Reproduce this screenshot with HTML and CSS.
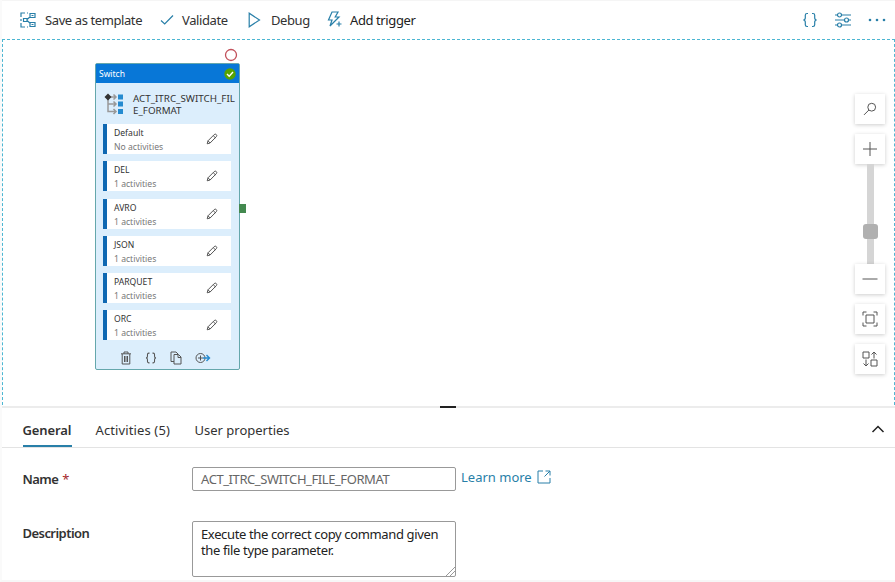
FILE: index.html
```html
<!DOCTYPE html>
<html lang="en">
<head>
<meta charset="utf-8">
<title>Pipeline</title>
<link rel="stylesheet" href="styles.css">
</head>
<body>
<svg class="defs" width="0" height="0">
  <symbol id="pencil" viewBox="0 0 12 12"><path d="M1.2 10.8 2 7.8 8.2 1.6a1.4 1.4 0 0 1 2.1 2.1L4.1 10zM2 7.8 4.1 10M7.2 2.6l2.1 2.1"/></symbol>
  <symbol id="braces" viewBox="0 0 16 16"><path d="M6 1.5H5Q3.3 1.5 3.3 3.2v2.6Q3.3 8 1.3 8q2 0 2 2.2v2.6q0 1.7 1.7 1.7h1M10 1.5h1q1.7 0 1.7 1.7v2.6q0 2.2 2 2.2-2 0-2 2.2v2.6q0 1.7-1.7 1.7h-1"/></symbol>
</svg>
<div class="app">
  <header class="toolbar">
    <div class="tool save">
      <svg width="16" height="16" viewBox="0 0 16 16"><path d="M5 1H1v4M1 11v4h4M1 7v2M7 1h1M7 15h1M7 7.500l3.500-3M7 8.500l3.500 3M10 1.500h5v4h-5zM10 10.500h5v4h-5zM3.500 6.500H7v3H3.500zM11.500 3.500h2M11.500 12.500h2"/></svg>
      <span>Save as template</span>
    </div>
    <div class="tool validate">
      <svg width="14" height="12" viewBox="0 0 14 12"><path d="M1 6.500 4.700 10 13 1.500"/></svg>
      <span>Validate</span>
    </div>
    <div class="tool debug">
      <svg width="13" height="16" viewBox="0 0 13 16"><path d="M1.200 1.200v13.600L11.500 8z"/></svg>
      <span>Debug</span>
    </div>
    <div class="tool trigger">
      <svg width="15" height="17" viewBox="0 0 15 17"><path d="M5 1h6L8.200 6H12L3 15l2-6H1.500zM12 10.500v5M9.500 13h5"/></svg>
      <span>Add trigger</span>
    </div>
    <div class="right-tools">
      <svg width="16" height="16"><use href="#braces"/></svg>
      <svg width="18" height="16" viewBox="0 0 18 16"><path d="M1 3h2.500M7.500 3H17M1 8h9.500M14.500 8H17M1 13h2.500M7.500 13H17"/><circle cx="5.500" cy="3" r="2"/><circle cx="12.500" cy="8" r="2"/><circle cx="5.500" cy="13" r="2"/></svg>
      <svg class="dots" width="18" height="4" viewBox="0 0 18 4"><circle cx="2" cy="2" r="1.300"/><circle cx="9" cy="2" r="1.300"/><circle cx="16" cy="2" r="1.300"/></svg>
    </div>
  </header>

  <main class="canvas">
    <svg class="fail-port" width="14" height="14" viewBox="0 0 14 14"><circle cx="7" cy="7" r="5.500"/></svg>
    <section class="node">
      <div class="node-head"><span>Switch</span>
        <svg width="12" height="12" viewBox="0 0 12 12"><circle cx="6" cy="6" r="5.700"/><path d="m3 6 2.200 2.200L9 4"/></svg>
      </div>
      <div class="node-title">
        <svg width="20" height="22" viewBox="0 0 20 22"><path class="wire" d="M4 4v14.500h8M4 11h8M4 4h8M9.500 1.500 12 4 9.500 6.500M9.500 8.500 12 11l-2.500 2.500M9.500 16l2.500 2.500L9.500 21"/><path class="diamond" d="M4 .5 7.500 4 4 7.500.5 4z"/><path class="blocks" d="M14 1.500h5v5h-5zM14 8.500h5v5h-5zM14 16h5v5h-5z"/></svg>
        <h2><span>ACT_ITRC_SWITCH_FIL</span><br><span class="second">E_FORMAT</span></h2>
      </div>
      <div class="cases">
        <div class="case"><div><b>Default</b><small>No activities</small></div><svg width="12" height="12"><use href="#pencil"/></svg></div>
        <div class="case"><div><b>DEL</b><small>1 activities</small></div><svg width="12" height="12"><use href="#pencil"/></svg></div>
        <div class="case"><div><b>AVRO</b><small>1 activities</small></div><svg width="12" height="12"><use href="#pencil"/></svg></div>
        <div class="case"><div><b>JSON</b><small>1 activities</small></div><svg width="12" height="12"><use href="#pencil"/></svg></div>
        <div class="case"><div><b>PARQUET</b><small>1 activities</small></div><svg width="12" height="12"><use href="#pencil"/></svg></div>
        <div class="case"><div><b>ORC</b><small>1 activities</small></div><svg width="12" height="12"><use href="#pencil"/></svg></div>
      </div>
      <div class="node-actions">
        <svg width="12" height="14" viewBox="0 0 12 14"><path d="M1 2.800h10M4 2.800V1h4v1.800M2.200 3v10h7.600V3M4.500 5v6M6 5v6M7.500 5v6"/></svg>
        <svg class="json" width="12" height="12"><use href="#braces"/></svg>
        <svg width="12" height="14" viewBox="0 0 12 14"><path d="M4 10.500H1V1h5l2 2M4 3.500h4.500L11 6v7H4zM8 3.500V6.500h3"/></svg>
        <svg width="16" height="12" viewBox="0 0 16 12"><circle cx="5.500" cy="6" r="4.500"/><path d="M5.500 3.500v5M3 6h5"/><path class="arrow" d="M8 6h6M11.500 3 14.500 6l-3 3"/></svg>
      </div>
    </section>
    <i class="success-port"></i>

    <aside class="zoom">
      <div class="zbtn find"><svg width="14" height="14" viewBox="0 0 14 14"><circle cx="8.700" cy="5.200" r="3.900"/><path d="M5.900 8 1 12.900"/></svg></div>
      <div class="zbtn"><svg width="16" height="16" viewBox="0 0 16 16"><path d="M8 1v14M1 8h14"/></svg></div>
      <div class="track"><i></i></div>
      <div class="zbtn minus"><svg width="16" height="16" viewBox="0 0 16 16"><path d="M.5 8h15"/></svg></div>
      <div class="zbtn fit"><svg width="16" height="16" viewBox="0 0 16 16"><path d="M1 4.500V1h3.500M11.500 1H15v3.500M15 11.500V15h-3.500M4.500 15H1v-3.500M4 4h8v8H4z"/></svg></div>
      <div class="zbtn"><svg width="16" height="16" viewBox="0 0 16 16"><path d="M1 1h6v6H1zM9 9h6v6H9zM12 7.500V1M9.500 3.500 12 1l2.500 2.500M4 8.500V15M1.500 12.500 4 15l2.500-2.500"/></svg></div>
    </aside>
  </main>

  <section class="panel">
    <i class="grip"></i>
    <nav class="tabs">
      <span class="tab active"><span>General</span></span>
      <span class="tab acts"><span>Activities (5)</span></span>
      <span class="tab props"><span>User properties</span></span>
      <svg width="14" height="8" viewBox="0 0 14 8"><path d="M1.500 7 7 1.500 12.500 7"/></svg>
    </nav>
    <div class="row name-row">
      <label><span>Name</span> <em>*</em></label>
      <div class="field name"><span>ACT_ITRC_SWITCH_FILE_FORMAT</span></div>
      <a><span>Learn more</span><svg width="14" height="14" viewBox="0 0 14 14"><path d="M6 1H1v12h12V8M8.500 1H13v4.500M13 1 7.500 6.500"/></svg></a>
    </div>
    <div class="row desc-row">
      <label><span>Description</span></label>
      <div class="field desc">Execute the correct copy command given the file type parameter.
        <svg width="10" height="10" viewBox="0 0 10 10"><path d="M1 10 10 1M5 10l5-5"/></svg>
      </div>
    </div>
  </section>
</div>
</body>
</html>
```
FILE: styles.css
```css
* { box-sizing: border-box; }
body { margin: 0; background: #fff; color: #323232; font: 13px/18px "Noto Sans", "Open Sans", sans-serif; overflow: hidden; }
svg { display: block; flex: none; fill: none; stroke: #555; stroke-width: 1; }
.defs { position: absolute; }
.app { width: 895px; height: 582px; display: flex; flex-direction: column; border-left: 2px solid #fafafa; border-bottom: 2px solid #f7f7f7; }
.app span { white-space: nowrap; }
.toolbar { height: 39px; flex: none; display: flex; align-items: center; padding: 0 9px 1px 18px; border-top: 1px solid #f5f5f5; letter-spacing: -.4px; }
.toolbar svg { stroke: #287fa8; stroke-width: 1.2; }
.tool { display: flex; align-items: center; flex: none; }
.save { width: 140px; gap: 9px; }
.validate { width: 88px; gap: 8px; }
.debug { width: 79px; gap: 10px; }
.trigger { gap: 8px; color: #222; }
.right-tools { margin-left: auto; display: flex; align-items: center; gap: 16px; }
.toolbar .dots { fill: #287fa8; stroke: none; }

.canvas { position: relative; height: 366px; flex: none; border: 1px dashed #4cb6d2; border-bottom: 0; }
.fail-port { position: absolute; left: 221px; top: 8px; stroke: #c2505a; stroke-width: 1.3; }
.success-port { position: absolute; left: 236px; top: 164px; width: 7px; height: 9px; background: #43894f; }
.node { position: absolute; left: 92px; top: 23px; width: 145px; height: 307px; border: 1px solid #65a7ac; border-radius: 2px; background: #dceefc; }
.node-head { height: 19px; display: flex; align-items: center; justify-content: space-between; background: #0877d7; color: #fff; font-size: 8.5px; padding: 1px 3px 0 3px; }
.node-head svg { fill: #57a300; stroke: none; }
.node-head path { fill: none; stroke: #fff; stroke-width: 1.4; }
.node-title { height: 41px; display: flex; padding: 10px 0 0 8px; gap: 9px; }
.node-title h2 { margin: 0; font-size: 9.8px; line-height: 12px; font-weight: 400; color: #333; }
.wire { stroke: #999; stroke-width: 1.5; }
.diamond { fill: #333; stroke: none; }
.blocks { fill: #258bd0; stroke: none; }
.cases { display: flex; flex-direction: column; gap: 7.3px; padding: 0 8px 0 7px; }
.case { height: 30px; display: flex; align-items: center; justify-content: space-between; padding: 0 13px 0 7px; background: #fff; border-left: 4px solid #0f68b2; }
.case div { padding-top: 2px; }
.case b, .case small { display: block; font-size: 8.6px; font-weight: 400; line-height: 14px; white-space: nowrap; }
.case small { color: #777; }
.node-actions { display: flex; align-items: center; padding: 11px 0 0 24px; gap: 13px; }
.node-actions .json { stroke-width: 1.4; }
.arrow { stroke: #258bd0; stroke-width: 1.4; }

.zoom { position: absolute; right: 9px; top: 54px; width: 30px; display: flex; flex-direction: column; align-items: center; }
.zbtn { width: 30px; height: 30px; flex: none; display: flex; align-items: center; justify-content: center; background: #fff; box-shadow: 0 1px 4px #0003; }
.find { margin-bottom: 10px; }
.track { width: 7px; height: 100px; background: #d5d5d5; display: flex; align-items: center; justify-content: center; padding-top: 35px; }
.track i { width: 15px; height: 15px; border-radius: 3px; background: #b0b0b0; flex: none; }
.minus, .fit { margin-bottom: 10px; }

.panel { position: relative; flex: 1; border-top: 2px solid #ececec; margin-top: 1px; }
.grip { position: absolute; left: 438px; top: -2px; width: 16px; height: 2px; background: #222; }
.tabs { height: 40px; display: flex; align-items: stretch; padding-left: 20.5px; border-bottom: 1px solid #e3e3e3; }
.tab { padding-top: 13px; flex: none; }
.active { width: 49px; font-weight: 600; border-bottom: 2px solid #287fa8; margin-right: 24px; letter-spacing: -.1px; }
.acts { width: 99px; letter-spacing: .12px; }
.tabs svg { margin: 17px 10px 0 auto; stroke: #222; stroke-width: 1.5; }
.row { display: flex; padding-left: 20.5px; }
.row label { width: 169.5px; flex: none; font-weight: 600; padding-top: 3px; letter-spacing: -.55px; }
.row em { color: #a4262c; font-style: normal; font-weight: 400; margin-left: 1px; }
.name-row { margin-top: 19px; height: 54px; }
.field { width: 264px; flex: none; border: 1px solid #999; border-radius: 2px; padding: 3px 8px; }
.name { height: 24px; color: #666; letter-spacing: -.42px; padding-top: 2px; }
.row a { display: flex; gap: 5px; margin-left: 5px; padding-top: 1px; color: #287fa8; }
.row a svg { stroke: #287fa8; margin-top: 2px; }
.desc { position: relative; height: 56px; line-height: 16px; padding-top: 4px; color: #222; letter-spacing: -.36px; }
.desc svg { position: absolute; right: 0; bottom: 0; stroke: #999; }
```
